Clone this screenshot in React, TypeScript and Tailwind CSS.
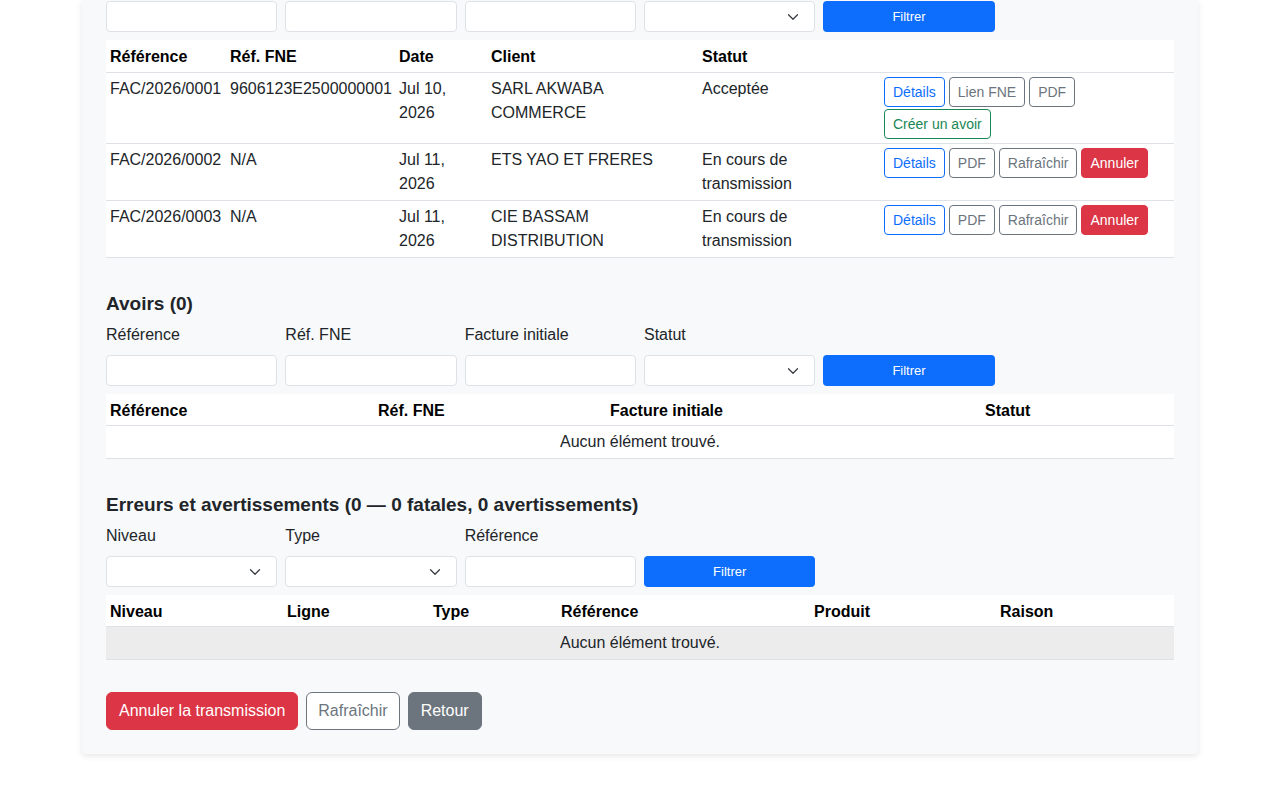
import React from 'react';

const font = { fontFamily: '"Liberation Sans", Arial, sans-serif' };

function Chevron() {
  return (
    <svg width="12" height="12" viewBox="0 0 16 16" className="absolute right-[15px] top-1/2 -translate-y-1/2">
      <path d="M2 5l6 6 6-6" fill="none" stroke="#343a40" strokeWidth="1.6" strokeLinecap="round" strokeLinejoin="round" />
    </svg>
  );
}

function TextInput() {
  return <input className="h-[31px] w-full rounded border border-[#dee2e6] bg-white px-2 text-sm outline-none" />;
}

function SelectInput() {
  return (
    <div className="relative h-[31px] w-full rounded border border-[#dee2e6] bg-white">
      <Chevron />
    </div>
  );
}

function FilterButton() {
  return (
    <button className="h-[31px] w-full rounded bg-[#0d6efd] text-[13px] text-white">Filtrer</button>
  );
}

type BtnKind = 'primary' | 'secondary' | 'success' | 'danger';

function SmallBtn({ kind, children }: { kind: BtnKind; children: React.ReactNode }) {
  const styles: Record<BtnKind, string> = {
    primary: 'border-[#0d6efd] text-[#0d6efd] bg-white',
    secondary: 'border-[#6c757d] text-[#6c757d] bg-white',
    success: 'border-[#198754] text-[#198754] bg-white',
    danger: 'border-[#dc3545] bg-[#dc3545] text-white',
  };
  return (
    <button className={`rounded border px-2 py-1 text-sm leading-[20px] ${styles[kind]}`}>{children}</button>
  );
}

const factures = [
  {
    ref: 'FAC/2026/0001',
    fne: '9606123E2500000001',
    date: 'Jul 10, 2026',
    client: 'SARL AKWABA COMMERCE',
    statut: 'Acceptée',
    actions: [
      ['primary', 'Détails'],
      ['secondary', 'Lien FNE'],
      ['secondary', 'PDF'],
      ['success', 'Créer un avoir'],
    ],
  },
  {
    ref: 'FAC/2026/0002',
    fne: 'N/A',
    date: 'Jul 11, 2026',
    client: 'ETS YAO ET FRERES',
    statut: 'En cours de transmission',
    actions: [
      ['primary', 'Détails'],
      ['secondary', 'PDF'],
      ['secondary', 'Rafraîchir'],
      ['danger', 'Annuler'],
    ],
  },
  {
    ref: 'FAC/2026/0003',
    fne: 'N/A',
    date: 'Jul 11, 2026',
    client: 'CIE BASSAM DISTRIBUTION',
    statut: 'En cours de transmission',
    actions: [
      ['primary', 'Détails'],
      ['secondary', 'PDF'],
      ['secondary', 'Rafraîchir'],
      ['danger', 'Annuler'],
    ],
  },
];

function EmptyTable({ headers, widths, striped }: { headers: string[]; widths: string[]; striped?: boolean }) {
  return (
    <table className="w-full table-fixed border-collapse bg-white text-base leading-6 text-[#212529]">
      <colgroup>
        {widths.map((w, i) => (
          <col key={i} className={w} />
        ))}
      </colgroup>
      <thead>
        <tr className="border-b border-[#dee2e6]">
          {headers.map((h) => (
            <th key={h} className="px-1 pb-[2px] pt-[5px] text-left font-bold text-black">{h}</th>
          ))}
        </tr>
      </thead>
      <tbody>
        <tr className={`border-b border-[#dee2e6] ${striped ? 'bg-[#ececec]' : ''}`}>
          <td colSpan={headers.length} className="px-1 py-1 text-center">Aucun élément trouvé.</td>
        </tr>
      </tbody>
    </table>
  );
}

function Label({ children }: { children: React.ReactNode }) {
  return <div className="mb-2 text-base leading-6 text-[#212529]">{children}</div>;
}

function SectionTitle({ children }: { children: React.ReactNode }) {
  return <h5 className="mt-[34px] mb-[7px] text-[19px] font-bold leading-6 text-[#212529]">{children}</h5>;
}

export default function App() {
  return (
    <div className="min-h-screen bg-white" style={font}>
      <div className="mx-auto w-[1116px] rounded-b bg-[#f8f9fa] px-6 pb-6 pt-px shadow-[0_2px_6px_rgba(0,0,0,0.1)]">
        {/* Factures filters */}
        <div className="grid grid-cols-6 gap-x-2">
          <TextInput />
          <TextInput />
          <TextInput />
          <SelectInput />
          <FilterButton />
        </div>

        <table className="mt-2 w-full table-fixed border-collapse bg-white text-base leading-6 text-[#212529]">
          <colgroup>
            <col className="w-[120px]" />
            <col className="w-[169px]" />
            <col className="w-[92px]" />
            <col className="w-[211px]" />
            <col className="w-[182px]" />
            <col />
          </colgroup>
          <thead>
            <tr className="border-b border-[#dee2e6]">
              {['Référence', 'Réf. FNE', 'Date', 'Client', 'Statut', ''].map((h, i) => (
                <th key={i} className="px-1 pb-[3px] pt-[5px] text-left font-bold text-black">{h}</th>
              ))}
            </tr>
          </thead>
          <tbody>
            {factures.map((f) => (
              <tr key={f.ref} className="border-b border-[#dee2e6] align-top">
                <td className="whitespace-nowrap px-1 py-1">{f.ref}</td>
                <td className="whitespace-nowrap px-1 py-1">{f.fne}</td>
                <td className="px-1 py-1">{f.date}</td>
                <td className="px-1 py-1">{f.client}</td>
                <td className="px-1 py-1">{f.statut}</td>
                <td className="px-1 py-1">
                  <div className="flex flex-wrap gap-x-1 gap-y-[2px]">
                    {f.actions.map(([k, label]) => (
                      <SmallBtn key={label} kind={k as BtnKind}>{label}</SmallBtn>
                    ))}
                  </div>
                </td>
              </tr>
            ))}
          </tbody>
        </table>

        {/* Avoirs */}
        <SectionTitle>Avoirs (0)</SectionTitle>
        <div className="grid grid-cols-6 gap-x-2">
          <div>
            <Label>Référence</Label>
            <TextInput />
          </div>
          <div>
            <Label>Réf. FNE</Label>
            <TextInput />
          </div>
          <div>
            <Label>Facture initiale</Label>
            <TextInput />
          </div>
          <div>
            <Label>Statut</Label>
            <SelectInput />
          </div>
          <div className="flex items-end">
            <FilterButton />
          </div>
        </div>
        <div className="mt-2">
          <EmptyTable
            headers={['Référence', 'Réf. FNE', 'Facture initiale', 'Statut']}
            widths={['w-[268px]', 'w-[232px]', 'w-[375px]', '']}
          />
        </div>

        {/* Erreurs */}
        <SectionTitle>Erreurs et avertissements (0 — 0 fatales, 0 avertissements)</SectionTitle>
        <div className="grid grid-cols-6 gap-x-2">
          <div>
            <Label>Niveau</Label>
            <SelectInput />
          </div>
          <div>
            <Label>Type</Label>
            <SelectInput />
          </div>
          <div>
            <Label>Référence</Label>
            <TextInput />
          </div>
          <div className="flex items-end">
            <FilterButton />
          </div>
        </div>
        <div className="mt-2">
          <EmptyTable
            headers={['Niveau', 'Ligne', 'Type', 'Référence', 'Produit', 'Raison']}
            widths={['w-[177px]', 'w-[146px]', 'w-[128px]', 'w-[253px]', 'w-[186px]', '']}
            striped
          />
        </div>

        {/* Actions */}
        <div className="mt-8 flex gap-2">
          <button className="rounded-md border border-[#dc3545] bg-[#dc3545] px-3 py-1.5 text-base leading-6 text-white">
            Annuler la transmission
          </button>
          <button className="rounded-md border border-[#6c757d] bg-white px-[11px] py-1.5 text-base leading-6 text-[#6c757d]">
            Rafraîchir
          </button>
          <button className="rounded-md border border-[#6c757d] bg-[#6c757d] px-3 py-1.5 text-base leading-6 text-white">
            Retour
          </button>
        </div>
      </div>
    </div>
  );
}
